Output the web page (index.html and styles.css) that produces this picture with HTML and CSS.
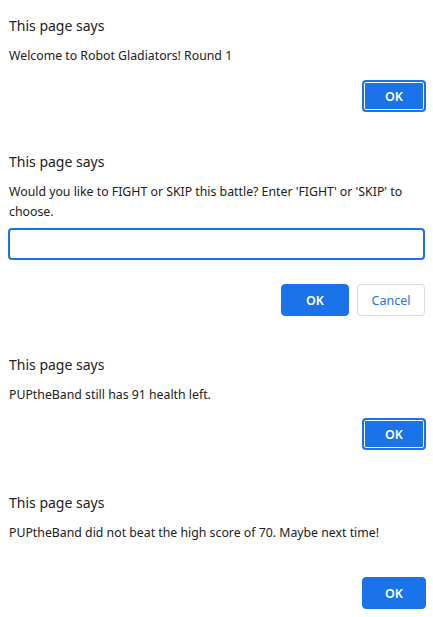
FILE: index.html
```html
<!DOCTYPE html>
<html>
<head>
<meta charset="utf-8">
<link rel="stylesheet" href="styles.css">
</head>
<body>
<section class="dialog d1">
  <div class="title">This page says</div>
  <div class="msg">Welcome to Robot Gladiators! Round 1</div>
  <div class="actions a1"><button class="btn ok focus">OK</button></div>
</section>
<section class="dialog d2">
  <div class="title">This page says</div>
  <div class="msg">Would you like to FIGHT or SKIP this battle? Enter 'FIGHT' or 'SKIP' to choose.</div>
  <input class="field" type="text">
  <div class="actions a2"><button class="btn ok">OK</button><button class="btn cancel">Cancel</button></div>
</section>
<section class="dialog d3">
  <div class="title">This page says</div>
  <div class="msg">PUPtheBand still has 91 health left.</div>
  <div class="actions a3"><button class="btn ok focus">OK</button></div>
</section>
<section class="dialog d4">
  <div class="title">This page says</div>
  <div class="msg">PUPtheBand did not beat the high score of 70. Maybe next time!</div>
  <div class="actions a4"><button class="btn ok">OK</button></div>
</section>
</body>
</html>
```
FILE: styles.css
```css
html, body { margin: 0; padding: 0; background: #fff; }
body { font-family: "Segoe UI", "Noto Sans", sans-serif; color: #202124; width: 433px; }
.dialog { padding: 0 8px 0 9px; }
.title { font-size: 14px; line-height: 20px; }
.msg { font-size: 12.3px; line-height: 20px; margin-top: 10px; }
.actions { display: flex; justify-content: flex-end; gap: 8px; }
.btn {
  box-sizing: border-box; width: 64px; height: 32px; border-radius: 4px;
  font-family: inherit; font-size: 12.5px; font-weight: 600; cursor: pointer; padding: 0;
}
.ok { background: #1a73e8; color: #fff; border: 1px solid #1a73e8; }
.ok.focus { border: 2px solid #1a73e8; box-shadow: inset 0 0 0 1px #fff; }
.cancel { background: #fff; color: #1a73e8; border: 1px solid #dadce0; font-weight: 400; }
.a2 .btn { width: 68px; }
.field {
  display: block; box-sizing: border-box; width: 417px; height: 32px; margin: 6px 0 0 -1px;
  border: 2px solid #1a73e8; border-radius: 4px; outline: none; padding: 0 8px;
}
.d1 { padding-top: 16px; }
.a1 { margin-top: 14px; }
.d2 { padding-top: 40px; }
.a2 { margin-top: 24px; }
.d3 { padding-top: 39px; }
.a3 { margin-top: 13px; }
.d4 { padding-top: 43px; }
.a4 { margin-top: 34px; }
.a1, .a3, .a4 { margin-right: -1px; }
```
